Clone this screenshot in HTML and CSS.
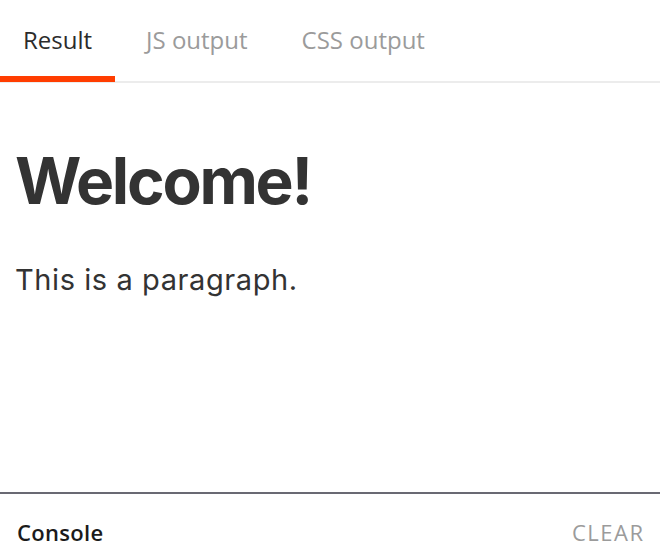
FILE: index.html
```html
<!DOCTYPE html>
<html lang="en">
<head>
<meta charset="utf-8">
<title>Playground output</title>
<link rel="stylesheet" href="styles.css">
</head>
<body>
<div class="page">
  <nav class="tabs">
    <div class="tab active">Result</div>
    <div class="tab">JS output</div>
    <div class="tab">CSS output</div>
  </nav>
  <main class="result">
    <h1 class="title">Welcome!</h1>
    <p class="para">This is a paragraph.</p>
  </main>
  <section class="console">
    <div class="console-head">
      <span class="console-title">Console</span>
      <span class="console-clear">CLEAR</span>
    </div>
  </section>
</div>
</body>
</html>
```
FILE: styles.css
```css
html, body {
  margin: 0;
  padding: 0;
  background: #ffffff;
}
.page {
  height: 100vh;
  display: flex;
  flex-direction: column;
  overflow: hidden;
}
.tabs {
  display: flex;
  height: 81px;
  border-bottom: 2px solid #ececec;
  font-family: "Open Sans", "Noto Sans", sans-serif;
  font-size: 24px;
  flex: 0 0 auto;
}
.tab {
  padding: 25px 23px 0;
  margin-right: 8px;
  margin-bottom: -1px;
  color: #9b9b9b;
  border-bottom: 6px solid transparent;
  line-height: 30px;
  box-sizing: border-box;
  height: 82px;
}
.tab.active {
  color: #2b2b2b;
  border-bottom-color: #ff3d00;
}
.result {
  flex: 1 1 auto;
  padding: 60px 15px 0;
  font-family: Inter, "Liberation Sans", sans-serif;
  color: #333333;
}
.title {
  margin: 0;
  font-size: 64px;
  font-weight: 700;
  line-height: 1.2;
  letter-spacing: -0.035em;
}
.para {
  margin: 43px 0 0;
  font-size: 29px;
  line-height: 1.2;
  letter-spacing: 0.02em;
}
.console {
  flex: 0 0 58px;
  border-top: 2px solid #696973;
  box-sizing: border-box;
  font-family: "Open Sans", "Noto Sans", sans-serif;
}
.console-head {
  display: flex;
  justify-content: space-between;
  padding: 23px 17px 0;
  font-size: 22px;
  line-height: 30px;
}
.console-title {
  font-weight: 600;
  color: #1b1b1b;
  letter-spacing: 0.3px;
}
.console-clear {
  color: #9b9b9b;
  letter-spacing: 1.5px;
  margin-right: -1.5px;
}
```
